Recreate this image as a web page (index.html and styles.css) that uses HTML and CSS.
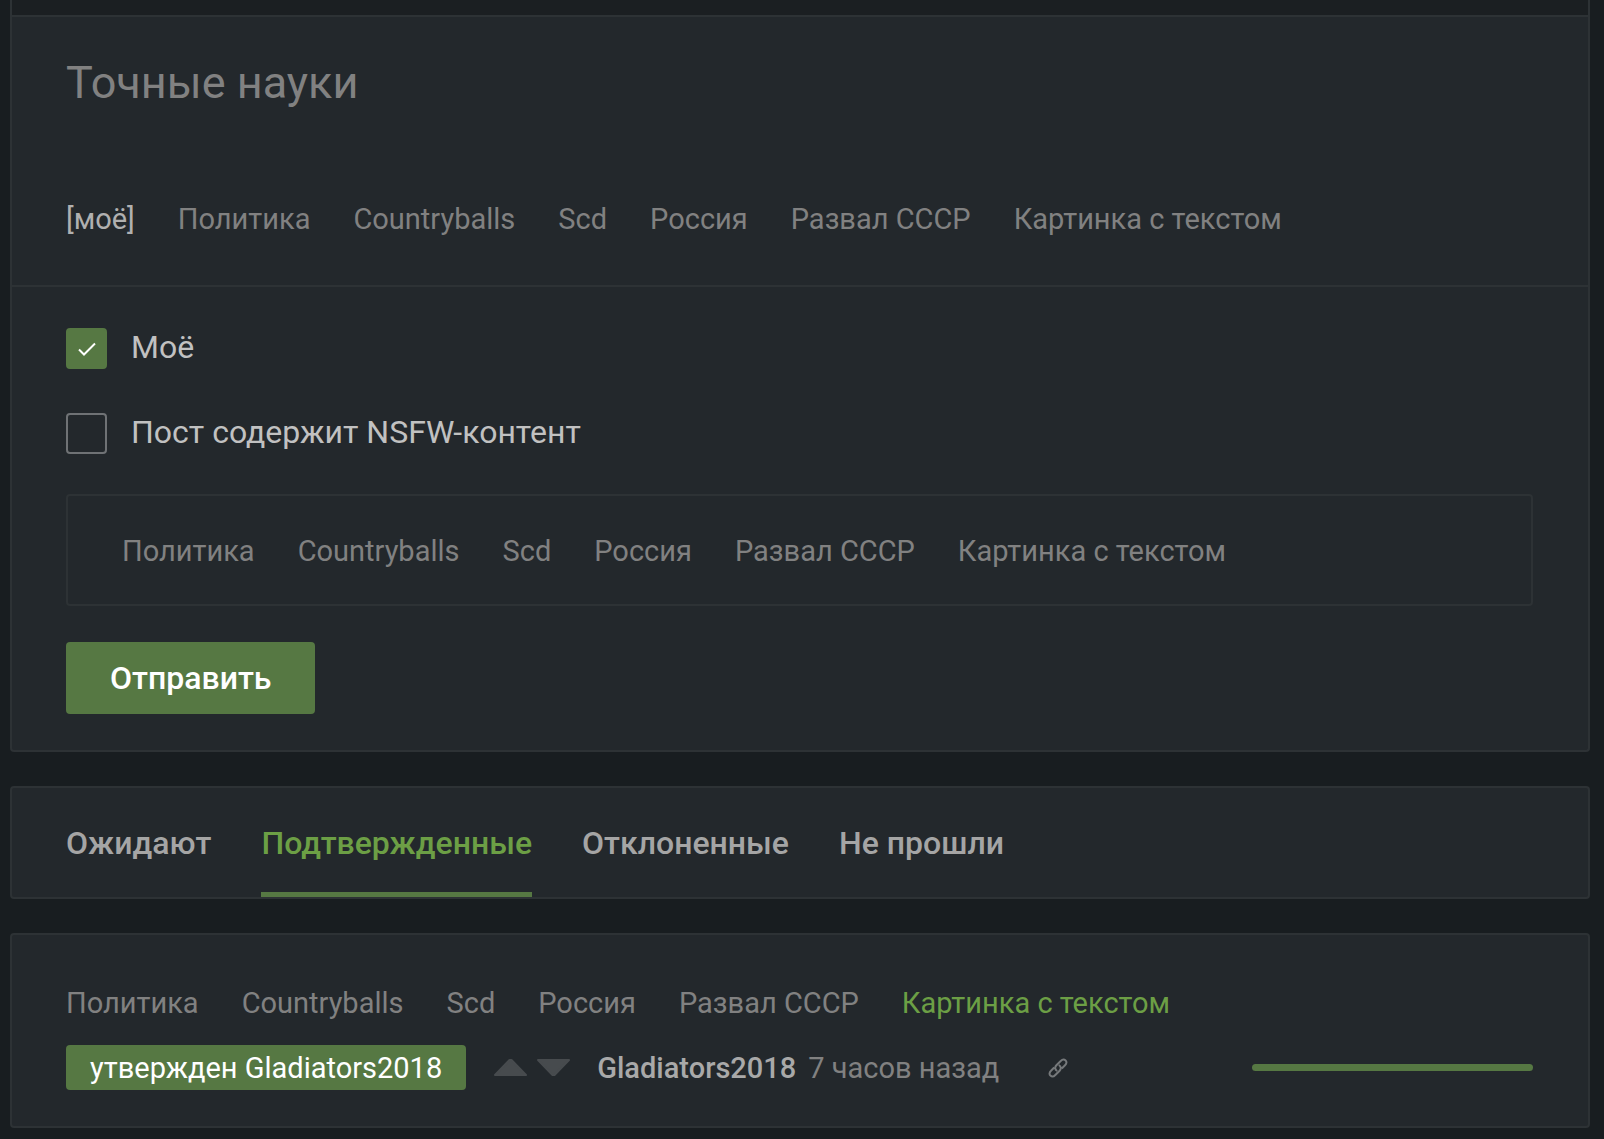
FILE: index.html
```html
<!DOCTYPE html>
<html lang="ru">
<head>
<meta charset="utf-8">
<meta name="viewport" content="width=device-width, initial-scale=1">
<title>Точные науки</title>
<link rel="stylesheet" href="styles.css">
</head>
<body>
<main class="page">
  <section class="card card-open">
    <div class="strip"></div>
    <header class="head">
      <h1 class="title">Точные науки</h1>
      <nav class="tags">
        <a class="tag tag-own" href="#">[моё]</a>
        <a class="tag" href="#">Политика</a>
        <a class="tag" href="#">Countryballs</a>
        <a class="tag" href="#">Scd</a>
        <a class="tag" href="#">Россия</a>
        <a class="tag" href="#">Развал СССР</a>
        <a class="tag" href="#">Картинка с текстом</a>
      </nav>
    </header>
    <form class="form">
      <div class="options">
        <label class="option" for="own">
          <span class="tick">
            <input class="box" type="checkbox" id="own" checked>
            <svg class="mark" viewBox="0 0 18 14" aria-hidden="true"><path d="M1 7.500l5 5L17 1.500"/></svg>
          </span>
          Моё
        </label>
        <label class="option" for="nsfw">
          <span class="tick"><input class="box" type="checkbox" id="nsfw"></span>
          Пост содержит NSFW-контент
        </label>
      </div>
      <div class="tags tags-field">
        <a class="tag" href="#">Политика</a>
        <a class="tag" href="#">Countryballs</a>
        <a class="tag" href="#">Scd</a>
        <a class="tag" href="#">Россия</a>
        <a class="tag" href="#">Развал СССР</a>
        <a class="tag" href="#">Картинка с текстом</a>
      </div>
      <button class="submit" type="button">Отправить</button>
    </form>
  </section>

  <nav class="card tabs">
    <a class="tab" href="#">Ожидают</a>
    <a class="tab tab-active" href="#">Подтвержденные</a>
    <a class="tab" href="#">Отклоненные</a>
    <a class="tab" href="#">Не прошли</a>
  </nav>

  <article class="card edit">
    <div class="tags">
      <a class="tag" href="#">Политика</a>
      <a class="tag" href="#">Countryballs</a>
      <a class="tag" href="#">Scd</a>
      <a class="tag" href="#">Россия</a>
      <a class="tag" href="#">Развал СССР</a>
      <a class="tag tag-added" href="#">Картинка с текстом</a>
    </div>
    <div class="meta">
      <span class="badge">утвержден Gladiators2018</span>
      <div class="votes">
        <button class="vote" type="button" aria-label="За"><svg viewBox="0 0 33 17"><path d="M1 16 15.500 1H17.500L32 16Z"/></svg></button>
        <button class="vote" type="button" aria-label="Против"><svg viewBox="0 0 33 17"><path d="M1 1 15.500 16H17.500L32 1Z"/></svg></button>
      </div>
      <a class="author" href="#">Gladiators2018</a>
      <time class="time">7 часов назад</time>
      <a class="link" href="#" aria-label="Ссылка">
        <svg viewBox="0 0 20 20"><path d="M9.200 13C6.800 11.500 6.600 9.200 8.400 7.300L12.700 3C14.300 1.300 16.300 1.200 17.600 2.400S18.700 5.700 17 7.300L13.800 10.500M10.800 7C13.200 8.500 13.400 10.800 11.600 12.700L7.300 17C5.700 18.700 3.700 18.800 2.400 17.600S1.300 14.300 3 12.700L6.200 9.500"/></svg>
      </a>
      <div class="rating"></div>
    </div>
  </article>
</main>
</body>
</html>
```
FILE: styles.css
```css
* {
  box-sizing: border-box;
}

body {
  margin: 0;
  background: #181d20;
  color: #818181;
  font: 400 29px/40px Roboto, "Noto Sans", sans-serif;
}

a {
  color: inherit;
  text-decoration: none;
}

.page {
  display: flex;
  flex-direction: column;
  gap: 34px;
  padding: 0 14px 11px 10px;
}

.card {
  background: #23282c;
  border: 2px solid #2d3235;
  border-radius: 4px;
}

.card-open {
  border-top: 0;
  border-radius: 0 0 4px 4px;
}

.strip {
  height: 17px;
  background: #1b1f22;
  border-bottom: 2px solid #2d3235;
}

.head {
  display: flex;
  flex-direction: column;
  gap: 86px;
  padding: 36px 54px 46px;
  border-bottom: 2px solid #2d3235;
}

.title {
  margin: 0;
  font-size: 45px;
  font-weight: 400;
  line-height: 60px;
}

.tags {
  display: flex;
  flex-wrap: wrap;
  column-gap: 43px;
}

.tag-own {
  color: #b0b0b0;
}

.tag-added {
  color: #6c9f45;
}

.form {
  display: flex;
  flex-direction: column;
  align-items: flex-start;
  padding: 41px 55px 36px 54px;
}

.options {
  display: flex;
  flex-direction: column;
  gap: 44px;
}

.option {
  display: flex;
  align-items: flex-start;
  gap: 24px;
  color: #c1c1c1;
  font-size: 32px;
  line-height: 38px;
}

.tick {
  display: grid;
  place-items: center;
}

.box,
.mark {
  grid-area: 1 / 1;
}

.box {
  appearance: none;
  width: 41px;
  height: 41px;
  margin: 0;
  border: 2px solid #6f7275;
  border-radius: 4px;
}

.box:checked {
  background: #567843;
  border-color: #567843;
}

.mark {
  width: 18px;
  height: 14px;
  fill: none;
  stroke: #fff;
  stroke-width: 2;
}

.tags-field {
  align-self: stretch;
  margin: 40px 0 36px;
  padding: 35px 54px 33px;
  border: 2px solid #2d3235;
  border-radius: 4px;
}

.submit {
  height: 72px;
  padding: 0 44px;
  border: 0;
  border-radius: 4px;
  background: #567843;
  color: #fff;
  font: 500 32px/40px Roboto, "Noto Sans", sans-serif;
}

.tabs {
  display: flex;
  flex-wrap: wrap;
  column-gap: 50px;
  padding: 0 54px;
}

.tab {
  padding: 35px 0 29px;
  border-bottom: 5px solid transparent;
  color: #a5a5a5;
  font-size: 32px;
  font-weight: 500;
}

.tab-active {
  border-color: #567843;
  color: #6c9f45;
}

.edit {
  display: flex;
  flex-direction: column;
  gap: 22px;
  padding: 48px 55px 36px 54px;
}

.meta {
  display: flex;
  align-items: center;
}

.badge {
  padding: 3px 24px 2px;
  border-radius: 4px;
  background: #567843;
  color: #fff;
}

.votes {
  display: flex;
  gap: 10px;
  margin: 0 27px 0 28px;
}

.vote {
  display: flex;
  padding: 0;
  border: 0;
  background: none;
}

.vote svg {
  width: 33px;
  height: 17px;
  fill: #474b4e;
  stroke: #474b4e;
  stroke-width: 2;
  stroke-linejoin: round;
}

.author {
  margin-right: 12px;
  color: #a9a9a9;
  font-weight: 500;
}

.link {
  display: flex;
  margin-left: 49px;
}

.link svg {
  width: 20px;
  height: 20px;
  fill: none;
  stroke: #76797b;
  stroke-width: 2;
}

.rating {
  width: 281px;
  height: 7px;
  margin-left: auto;
  border-radius: 4px;
  background: #567843;
}
```
